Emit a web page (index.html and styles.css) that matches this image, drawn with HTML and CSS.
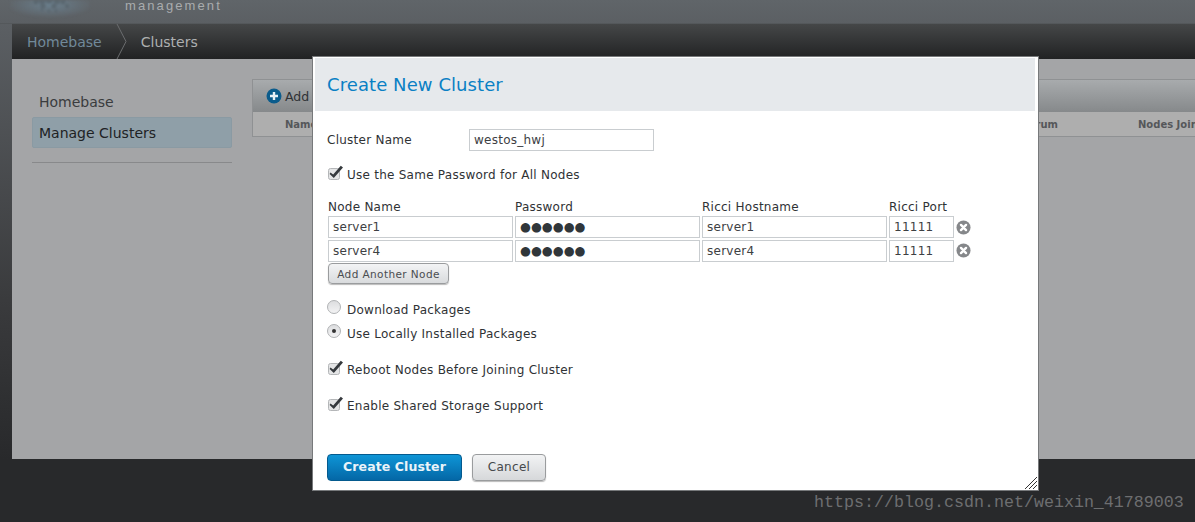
FILE: index.html
```html
<!DOCTYPE html>
<html lang="en">
<head>
<meta charset="utf-8">
<title>Create New Cluster</title>
<link rel="stylesheet" href="styles.css">
</head>
<body>
<svg class="defs" width="0" height="0">
  <defs>
    <symbol id="chk" viewBox="0 0 17 16">
      <rect x="1.5" y="3.5" width="11" height="11" rx="2" fill="#e4e5e6" stroke="#b4b6b8"/>
      <path d="M3.4 7.4 L6.2 9.6 L13.8 0.8 L16 2.6 L6.8 13 L2.6 9 Z" fill="#35393d"/>
    </symbol>
    <symbol id="rm" viewBox="0 0 16 16">
      <circle cx="8" cy="8" r="7.5" fill="#85878a"/>
      <path d="M5.3 5.3 L10.7 10.7 M10.7 5.3 L5.3 10.7" stroke="#fff" stroke-width="2.6" stroke-linecap="round"/>
    </symbol>
    <radialGradient id="glow" cx="50%" cy="20%" r="55%">
      <stop offset="0" stop-color="#6f8a9c" stop-opacity=".7"/>
      <stop offset="1" stop-color="#6f8a9c" stop-opacity="0"/>
    </radialGradient>
  </defs>
</svg>
<div class="page">
  <header class="masthead">
    <svg class="logo" width="100" height="24" viewBox="0 0 100 24">
      <rect x="10" y="0" width="80" height="24" fill="url(#glow)"/>
      <g fill="#56626a" opacity=".7">
        <circle cx="42" cy="1" r="3.2"/><circle cx="49" cy="0" r="3.6"/><circle cx="57" cy="1" r="3.2"/>
        <circle cx="36" cy="2" r="2.4"/><circle cx="63" cy="2" r="2.4"/>
        <circle cx="43" cy="6" r="2.6"/><circle cx="54" cy="6" r="2.6"/><circle cx="67" cy="6" r="2"/>
        <circle cx="49" cy="11" r="1.4"/><circle cx="56" cy="11" r="1.4"/><circle cx="42" cy="10" r="1.2"/>
      </g>
    </svg>
    <span class="brand">management</span>
  </header>
  <div class="shell">
    <nav class="crumbs">
      <a class="crumb home">Homebase</a>
      <svg class="sep" width="14" height="35" viewBox="0 0 14 35"><path d="M1 0 L10 17.5 L1 35" fill="none" stroke="#6b6d6f"/></svg>
      <span class="crumb">Clusters</span>
    </nav>
    <main class="content">
      <aside class="side">
        <div class="side-item">Homebase</div>
        <div class="side-item active">Manage Clusters</div>
        <hr class="side-rule">
      </aside>
      <section class="panel">
        <div class="toolbar">
          <svg class="add" width="16" height="16" viewBox="0 0 16 16"><circle cx="8" cy="8" r="7.5" fill="#0b5c8c"/><path d="M8 4 V12 M4 8 H12" stroke="#e8f0f5" stroke-width="2.4"/></svg>
          <span>Add</span>
        </div>
        <div class="thead">
          <span>Name</span><span class="th-q">Quorum</span><span class="th-n">Nodes Joined</span>
        </div>
      </section>
    </main>
  </div>
  <div class="modal">
    <h1 class="modal-title">Create New Cluster</h1>
    <form class="form">
      <div class="name-row">
        <label class="name-label">Cluster Name</label>
        <div class="field name-field">westos_hwj</div>
      </div>
      <div class="opt first-opt"><svg class="chk"><use href="#chk"/></svg><span>Use the Same Password for All Nodes</span></div>
      <div class="nodes">
        <span class="col">Node Name</span><span class="col">Password</span><span class="col">Ricci Hostname</span><span class="col">Ricci Port</span><span></span>
        <div class="field">server1</div><div class="field dots">●●●●●●</div><div class="field">server1</div><div class="field">11111</div><svg class="rm"><use href="#rm"/></svg>
        <div class="field">server4</div><div class="field dots">●●●●●●</div><div class="field">server4</div><div class="field">11111</div><svg class="rm"><use href="#rm"/></svg>
      </div>
      <button type="button" class="btn small">Add Another Node</button>
      <div class="opt radio-first"><span class="radio"></span><span>Download Packages</span></div>
      <div class="opt radio-next"><span class="radio on"></span><span>Use Locally Installed Packages</span></div>
      <div class="opt gap"><svg class="chk"><use href="#chk"/></svg><span>Reboot Nodes Before Joining Cluster</span></div>
      <div class="opt gap"><svg class="chk"><use href="#chk"/></svg><span>Enable Shared Storage Support</span></div>
      <div class="actions">
        <button type="button" class="btn primary">Create Cluster</button>
        <button type="button" class="btn cancel">Cancel</button>
      </div>
    </form>
    <svg class="grip" width="14" height="14" viewBox="0 0 14 14"><path d="M1 13 L13 1 M5 13 L13 5 M9 13 L13 9" stroke="#333" fill="none"/></svg>
  </div>
  <div class="mark">https://blog.csdn.net/weixin_41789003</div>
</div>
</body>
</html>
```
FILE: styles.css
```css
* { box-sizing: border-box; }
html, body { margin: 0; padding: 0; }
body { font-family: "DejaVu Sans", sans-serif; font-size: 12px; color: #2f3235; background: #28292b; }
.defs { position: absolute; }
.page { position: relative; width: 1195px; height: 522px; overflow: hidden;
  background: linear-gradient(#606569 0, #5b5f63 24px, #3a3b3d 300px, #28292b 460px); }
.masthead { height: 24px; position: relative; border-bottom: 1px solid #54585b; }
.logo { position: absolute; left: 0; top: 0; filter: blur(.8px); }
.brand { position: absolute; left: 125px; top: -1px; font-family: "Liberation Sans", sans-serif; font-size: 13px; line-height: 14px; letter-spacing: 2.1px; color: #a9acae; }
.shell { margin-left: 12px; }
.crumbs { height: 35px; display: flex; align-items: center; background: linear-gradient(#454748, #212223); font-size: 14px; }
.crumb { color: #aeb0b1; }
.crumb.home { color: #71899a; margin-left: 15px; }
.sep { margin: 0 11px 0 14px; }
.content { height: 400px; background: #a4a5a7; display: flex; padding: 20px 0 0 20px; }
.side { width: 200px; margin-right: 20px; flex: none; font-size: 14px; }
.side-item { height: 31px; padding: 0 7px; display: flex; align-items: center; color: #3a3c3e; margin-top: 7px; }
.side-item + .side-item { margin-top: 0; }
.side-item.active { background: #8f9fa8; border: 1px solid #8a9aa3; border-radius: 2px; padding: 0 6px; color: #202224; }
.side-rule { border: 0; border-top: 1px solid #88898b; margin: 14px 0 0; }
.panel { flex: 1; height: 58px; border: 1px solid #8f9193; border-right: 0; min-width: 0; }
.toolbar { height: 32px; display: flex; align-items: center; gap: 3px; padding-left: 13px; background: linear-gradient(#a8abad, #86898b); font-size: 12.5px; color: #2f3235; }
.thead { height: 24px; background: #aeaeae; position: relative; font-size: 10px; font-weight: 700; color: #55575a; display: flex; align-items: center; padding-left: 32px; white-space: nowrap; }
.th-q { position: absolute; left: 760px; }
.th-n { position: absolute; left: 885px; }
.modal { position: absolute; left: 312px; top: 56px; width: 727px; height: 435px; background: #fff; border: 1px solid #77797b; padding: 1px 3px 0 2px; }
.modal-title { margin: 0; height: 53px; padding: 0 12px; display: flex; align-items: center; background: #e6e9ec; color: #0a80c4; font-size: 18px; font-weight: 400; letter-spacing: .08px; }
.form { padding: 18px 0 0 12px; position: relative; font-size: 12px; letter-spacing: .25px; }
.name-row { display: flex; align-items: center; height: 22px; }
.name-label { width: 142px; }
.field { height: 22px; border: 1px solid #c9cdd0; padding: 0 4px; display: flex; align-items: center; color: #3d4043; background: #fff; overflow: hidden; white-space: nowrap; }
.name-field { width: 185px; }
.opt { display: flex; align-items: center; gap: 3px; height: 18px; }
.first-opt { margin-top: 15px; }
.chk { width: 17px; height: 16px; margin: -4px 0 0 0; flex: none; }
.nodes { display: grid; grid-template-columns: 185px 185px 185px 65px 18px; column-gap: 2px; margin: 13px 0 0 1px; }
.col { height: 19px; display: flex; align-items: center; }
.nodes .field:nth-child(n+11) { margin-top: 2px; }
.dots { font-size: 12.5px; letter-spacing: 0; color: #30363a; padding-bottom: 2px; }
.rm { width: 15px; height: 15px; align-self: center; }
.btn { font-family: "DejaVu Sans", sans-serif; border-radius: 4px; cursor: pointer; }
.small { display: block; width: 121px; height: 21px; margin: 1px 0 0 1px; padding: 0; font-size: 10.5px; letter-spacing: .4px; color: #4a4d50; background: linear-gradient(#f3f4f5, #d9dbdd); border: 1px solid #9a9c9e; box-shadow: 0 1px 1px #bbb; }
.radio { width: 14px; height: 14px; border-radius: 50%; border: 1px solid #b0b2b4; background: linear-gradient(#dcdddf, #f3f3f4); margin: -7px 3px 0 0; flex: none; position: relative; }
.radio.on::after { content: ""; position: absolute; left: 4px; top: 4px; width: 4px; height: 4px; border-radius: 50%; background: #333; }
.radio-first { margin-top: 17px; }
.radio-next { margin-top: 6px; }
.gap { margin-top: 18px; }
.actions { display: flex; gap: 10px; margin-top: 39px; }
.primary { width: 135px; height: 27px; padding: 0 0 2px; border: 1px solid #045a8e; font-size: 12.5px; font-weight: 700; letter-spacing: .1px; color: #eaf3f9; background: linear-gradient(#0e95d6, #0467a6); }
.cancel { width: 74px; height: 27px; padding: 0 0 2px; border: 1px solid #9a9c9e; font-size: 12px; letter-spacing: .3px; color: #45484b; background: linear-gradient(#f2f3f4, #d6d8da); box-shadow: 0 1px 1px #bbb; }
.grip { position: absolute; right: 0; bottom: 0; }
.mark { position: absolute; left: 814px; top: 493px; font-family: "Liberation Mono", monospace; font-size: 16.67px; line-height: 20px; color: #6d6e70; white-space: nowrap; }
```
